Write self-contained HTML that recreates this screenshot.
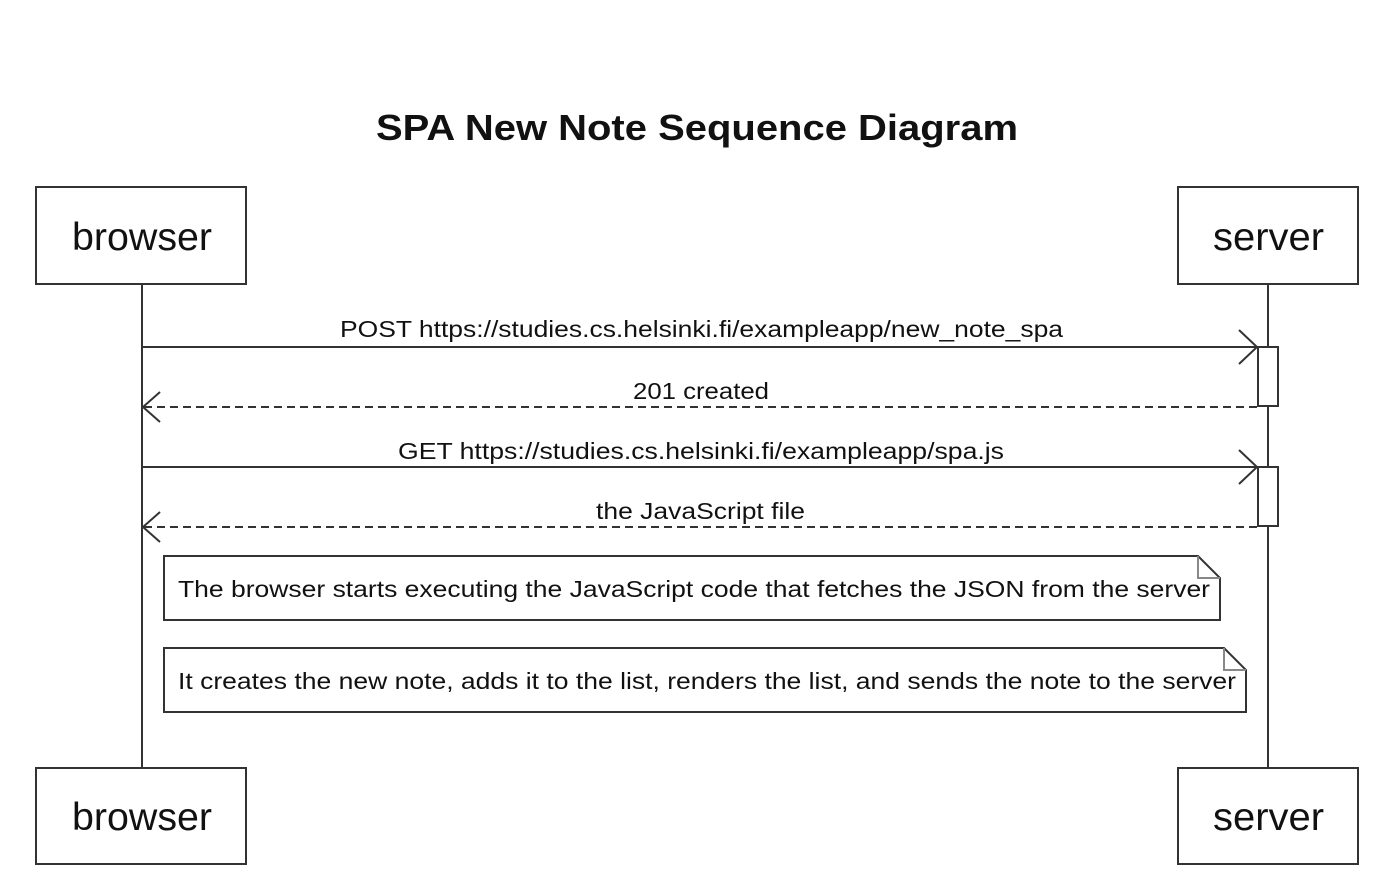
<!DOCTYPE html>
<html><head><meta charset="utf-8"><style>
html,body{margin:0;padding:0;background:#fff;width:1380px;height:892px;overflow:hidden}
svg{display:block}
text{font-family:"Liberation Sans",Arial,sans-serif;fill:#111}
</style></head><body>
<svg width="1380" height="892" viewBox="0 0 1380 892">
<text x="697" y="140" font-size="36" font-weight="bold" text-anchor="middle" textLength="642" lengthAdjust="spacingAndGlyphs">SPA New Note Sequence Diagram</text>
<g stroke="#333" stroke-width="2" fill="none">
<line x1="142" y1="284" x2="142" y2="768"/>
<line x1="1268" y1="284" x2="1268" y2="768"/>
<rect x="36" y="187" width="210" height="97" fill="#fff"/>
<rect x="1178" y="187" width="180" height="97" fill="#fff"/>
<rect x="36" y="768" width="210" height="96" fill="#fff"/>
<rect x="1178" y="768" width="180" height="96" fill="#fff"/>
<rect x="1258" y="347" width="20" height="59" fill="#fff"/>
<rect x="1258" y="467" width="20" height="59" fill="#fff"/>
<line x1="142" y1="347" x2="1257" y2="347"/>
<polyline points="1239,330 1257,347 1239,364"/>
<line x1="1257" y1="407" x2="144" y2="407" stroke-dasharray="8,5"/>
<polyline points="160,392 143,407 160,422"/>
<line x1="142" y1="467" x2="1257" y2="467"/>
<polyline points="1239,450 1257,467 1239,484"/>
<line x1="1257" y1="527" x2="144" y2="527" stroke-dasharray="8,5"/>
<polyline points="160,512 143,527 160,542"/>
<path d="M164,556 H1198 L1220,578 V620 H164 Z" fill="#fff"/>
<path d="M1198,556 V578 H1220" stroke="#888"/>
<path d="M164,648 H1224 L1246,670 V712 H164 Z" fill="#fff"/>
<path d="M1224,648 V670 H1246" stroke="#888"/>
</g>
<g font-size="39">
<text x="72" y="250" textLength="140" lengthAdjust="spacingAndGlyphs">browser</text>
<text x="1213" y="250" textLength="111" lengthAdjust="spacingAndGlyphs">server</text>
<text x="72" y="830" textLength="140" lengthAdjust="spacingAndGlyphs">browser</text>
<text x="1213" y="830" textLength="111" lengthAdjust="spacingAndGlyphs">server</text>
</g>
<g font-size="23">
<text x="340" y="337" textLength="723" lengthAdjust="spacingAndGlyphs">POST https://studies.cs.helsinki.fi/exampleapp/new_note_spa</text>
<text x="633" y="399" textLength="136" lengthAdjust="spacingAndGlyphs">201 created</text>
<text x="398" y="459" textLength="606" lengthAdjust="spacingAndGlyphs">GET https://studies.cs.helsinki.fi/exampleapp/spa.js</text>
<text x="596" y="519" textLength="209" lengthAdjust="spacingAndGlyphs">the JavaScript file</text>
</g>
<g font-size="23">
<text x="178" y="597" textLength="1032" lengthAdjust="spacingAndGlyphs">The browser starts executing the JavaScript code that fetches the JSON from the server</text>
<text x="178" y="689" textLength="1058" lengthAdjust="spacingAndGlyphs">It creates the new note, adds it to the list, renders the list, and sends the note to the server</text>
</g>
</svg>
</body></html>
